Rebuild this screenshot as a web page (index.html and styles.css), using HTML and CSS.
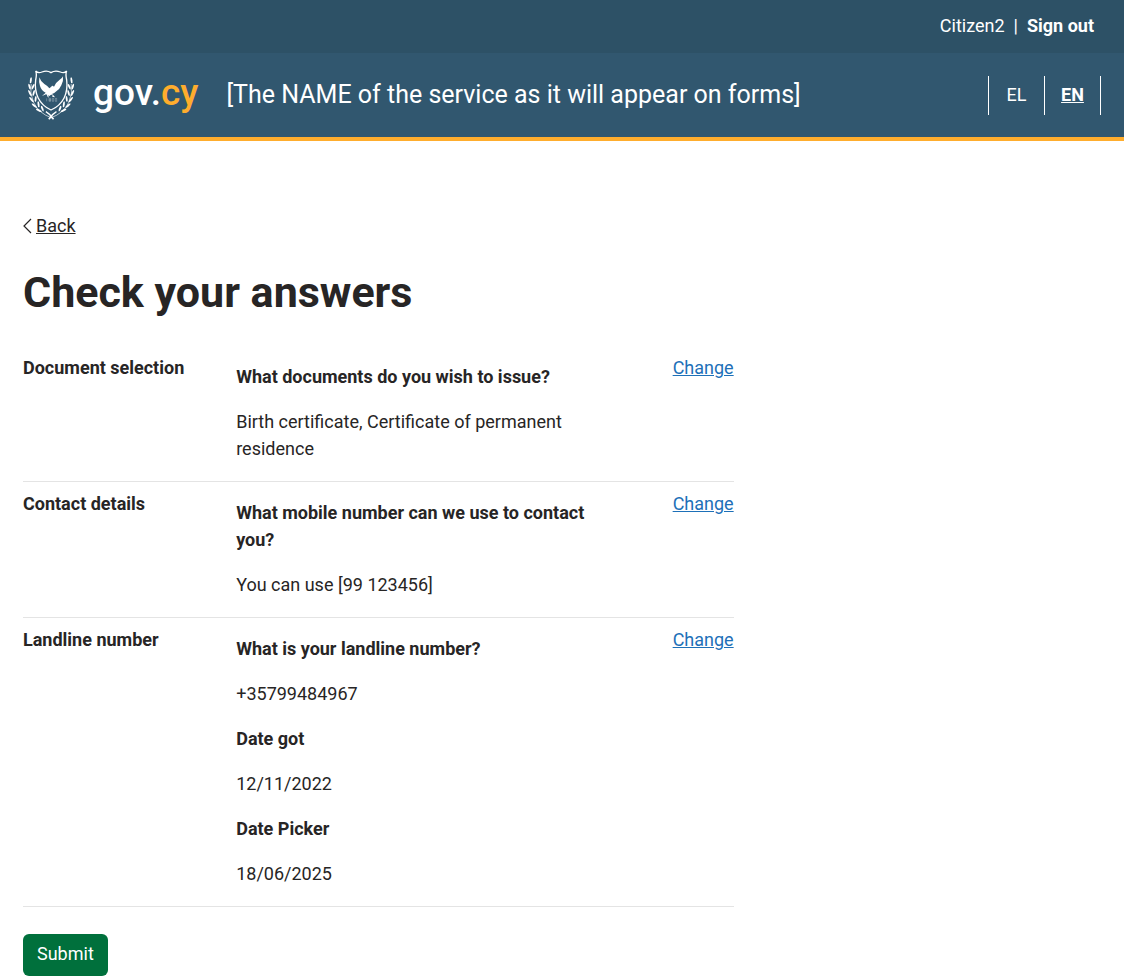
FILE: index.html
```html
<!DOCTYPE html>
<html lang="en">
<head>
<meta charset="utf-8">
<meta name="viewport" content="width=device-width, initial-scale=1">
<title>Check your answers - gov.cy</title>
<link rel="stylesheet" href="styles.css">
</head>
<body>
<div class="user-bar">
  <span>Citizen2</span><span>|</span><a class="sign-out" href="#">Sign out</a>
</div>
<header class="site-header">
  <a class="brand" href="#" aria-label="gov.cy">
    <svg class="emblem" viewBox="18 27 150 156" aria-hidden="true">
      <defs>
        <g id="branch" fill="#fff">
          <path d="M96 174Q54 160 38 126Q26 100 31 72" fill="none" stroke="#fff" stroke-width="2"/>
          <ellipse cx="30" cy="61" rx="3" ry="9" transform="rotate(8 30 61)"/>
          <ellipse cx="26" cy="80" rx="3" ry="9" transform="rotate(-18 26 80)"/>
          <ellipse cx="37" cy="80" rx="3" ry="9" transform="rotate(25 37 80)"/>
          <ellipse cx="27" cy="99" rx="3" ry="10" transform="rotate(-28 27 99)"/>
          <ellipse cx="39" cy="99" rx="3" ry="9" transform="rotate(16 39 99)"/>
          <ellipse cx="32" cy="119" rx="3" ry="10" transform="rotate(-40 32 119)"/>
          <ellipse cx="45" cy="117" rx="3" ry="9" transform="rotate(6 45 117)"/>
          <ellipse cx="41" cy="137" rx="3" ry="10" transform="rotate(-52 41 137)"/>
          <ellipse cx="54" cy="133" rx="3" ry="9" transform="rotate(-8 54 133)"/>
          <ellipse cx="55" cy="151" rx="3" ry="10" transform="rotate(-65 55 151)"/>
          <ellipse cx="66" cy="146" rx="3" ry="9" transform="rotate(-24 66 146)"/>
          <path d="M78 153Q94 162 103 176L99 179Q90 165 76 157Z"/>
        </g>
      </defs>
      <use href="#branch" transform="matrix(.96 0 0 1 3.7 0)"/>
      <use href="#branch" transform="matrix(-.96 0 0 1 183.3 0)"/>
      <path d="M47 33Q54 41 66 36Q81 30 93 38Q105 30 121 36Q133 41 140 33Q136 42 140 60C145 100 130 134 93 150C57 134 42 100 47 60Q51 42 47 33Z" fill="#31576f" stroke="#fff" stroke-width="4"/>
      <path d="M58 52Q62 65 73 72Q83 77 88 85L94 80Q96 75 102 80Q106 68 119 59Q127 54 129 49Q131 62 124 76Q119 88 109 94Q103 101 96 102L88 108L78 103L66 108L77 98Q64 92 60 78Q56 66 58 52Z" fill="#fff"/>
      <path d="M93 101L103 110L97 109M82 104L85 112" fill="none" stroke="#fff" stroke-width="3"/>
      <path d="M80 115V124M87 115H92V120H87ZM87 120H92V124H87ZM97 124V115H101V124ZM106 124V115H110V124Z" fill="none" stroke="#fff" stroke-width="1" opacity=".8"/>
    </svg>
    <span class="wordmark">gov.<span class="wordmark-cy">cy</span></span>
  </a>
  <div class="service-name">[The NAME of the service as it will appear on forms]</div>
  <nav class="languages" aria-label="Language">
    <a href="#" lang="el">EL</a>
    <a class="current" href="#" aria-current="true">EN</a>
  </nav>
</header>
<main class="page">
  <a class="back" href="#">
    <svg class="chevron" viewBox="0 0 9 16" aria-hidden="true"><path d="M8 1L1 8L8 15" fill="none" stroke="currentColor" stroke-width="1.2"/></svg>
    <span class="back-text">Back</span>
  </a>
  <h1>Check your answers</h1>
  <dl class="summary">
    <div class="row">
      <dt>Document selection</dt>
      <dd>
        <p class="question">What documents do you wish to issue?</p>
        <p>Birth certificate, Certificate of permanent residence</p>
      </dd>
      <dd class="action"><a href="#" aria-label="Change Document selection">Change</a></dd>
    </div>
    <div class="row">
      <dt>Contact details</dt>
      <dd>
        <p class="question">What mobile number can we use to contact you?</p>
        <p>You can use [99 123456]</p>
      </dd>
      <dd class="action"><a href="#" aria-label="Change Contact details">Change</a></dd>
    </div>
    <div class="row">
      <dt>Landline number</dt>
      <dd>
        <p class="question">What is your landline number?</p>
        <p>+35799484967</p>
        <p class="question">Date got</p>
        <p>12/11/2022</p>
        <p class="question">Date Picker</p>
        <p>18/06/2025</p>
      </dd>
      <dd class="action"><a href="#" aria-label="Change Landline number">Change</a></dd>
    </div>
  </dl>
  <button class="submit" type="submit">Submit</button>
</main>
</body>
</html>
```
FILE: styles.css
```css
* {
  box-sizing: border-box;
}

body {
  margin: 0;
  background: #fff;
  color: #272525;
  font: 18px/27px Roboto, "Liberation Sans", sans-serif;
}

.user-bar {
  display: flex;
  justify-content: flex-end;
  gap: 9px;
  padding: 12px 30px 14px;
  background: #2d5166;
  color: #fff;
}

.sign-out {
  color: #fff;
  font-weight: 700;
  text-decoration: none;
}

.site-header {
  display: flex;
  align-items: center;
  padding: 16px 23px 16px 26px;
  background: #31576f;
  border-bottom: 4px solid #ffad2d;
  color: #fff;
}

.brand {
  display: flex;
  align-items: center;
  gap: 17px;
  color: #fff;
  text-decoration: none;
}

.emblem {
  width: 50px;
  height: 52px;
}

.wordmark {
  padding-bottom: 4px;
  font-size: 37px;
  line-height: 48px;
  font-weight: 500;
}

.wordmark-cy {
  color: #ffad2d;
}

.service-name {
  flex: 1;
  margin-left: 28px;
  font-size: 25px;
  line-height: 38px;
}

.languages {
  display: flex;
  border-left: 1px solid #fff;
}

.languages a {
  min-width: 56px;
  padding: 5px 16px 7px;
  border-right: 1px solid #fff;
  color: #fff;
  text-align: center;
  text-decoration: none;
}

.languages .current {
  font-weight: 700;
  text-decoration: underline;
}

.page {
  padding: 71px 23px 4px;
}

.back {
  display: flex;
  align-items: center;
  gap: 4px;
  width: fit-content;
  color: #272525;
  text-decoration: none;
}

.back-text {
  text-decoration: underline;
}

.chevron {
  width: 9px;
  height: 16px;
}

h1 {
  margin: 27px 0 35px;
  font-size: 43px;
  line-height: 53px;
}

.summary {
  width: calc(66.6667% - 8px);
  margin: 0 0 27px;
}

.row {
  display: grid;
  grid-template-columns: 3fr 5fr 2fr;
  padding-bottom: 1px;
  border-bottom: 1px solid #e4e4e4;
}

.row + .row {
  padding-top: 8px;
}

dt,
.question {
  font-weight: 700;
}

dd {
  margin: 9px 0 0;
}

dd p {
  margin: 0 0 18px;
}

.action {
  margin: 0;
  text-align: right;
}

.action a {
  color: #1d70b8;
}

.submit {
  padding: 6px 14px 9px;
  border: 0;
  border-radius: 6px;
  background: #00703c;
  color: #fff;
  font: inherit;
}
```
